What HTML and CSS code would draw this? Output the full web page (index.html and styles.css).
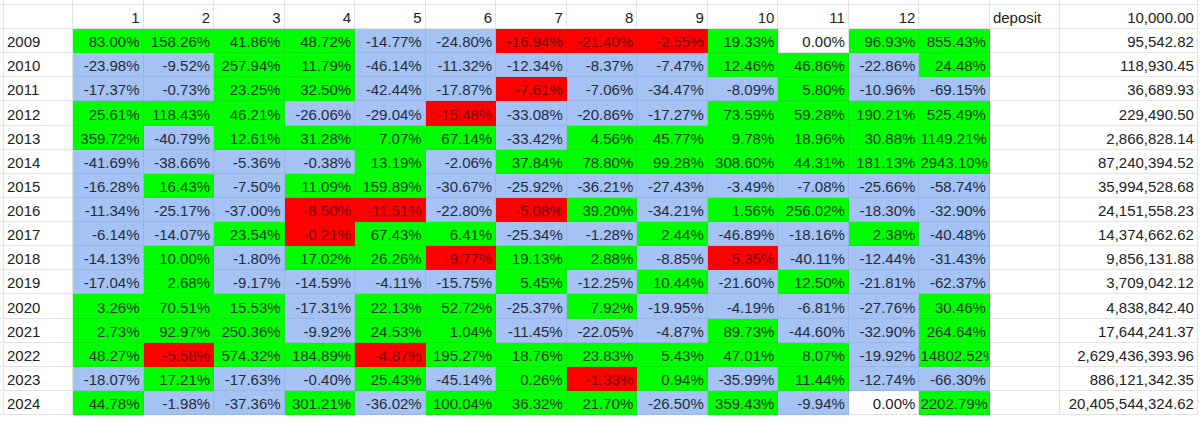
FILE: index.html
```html
<!DOCTYPE html>
<html>
<head>
<meta charset="utf-8">
<link rel="stylesheet" href="styles.css">
</head>
<body>
<div class="sheet">
<div class="c"></div><div class="c"></div><div class="c"></div><div class="c"></div><div class="c"></div><div class="c"></div><div class="c"></div><div class="c"></div><div class="c"></div><div class="c"></div><div class="c"></div><div class="c"></div><div class="c"></div><div class="c"></div><div class="c"></div><div class="c"></div><div class="c"></div>

<div class="c"></div><div class="c"></div><div class="c">1</div><div class="c">2</div><div class="c">3</div><div class="c">4</div><div class="c">5</div><div class="c">6</div><div class="c">7</div><div class="c">8</div><div class="c">9</div><div class="c">10</div><div class="c">11</div><div class="c">12</div><div class="c"></div><div class="c lbl">deposit</div><div class="c">10,000.00</div>

<div class="c"></div><div class="c y">2009</div><div class="c g">83.00%</div><div class="c g">158.26%</div><div class="c g">41.86%</div><div class="c g">48.72%</div><div class="c b">-14.77%</div><div class="c b">-24.80%</div><div class="c r">-16.94%</div><div class="c r">-21.40%</div><div class="c r">-2.55%</div><div class="c g">19.33%</div><div class="c">0.00%</div><div class="c g">96.93%</div><div class="c g">855.43%</div><div class="c"></div><div class="c">95,542.82</div>

<div class="c"></div><div class="c y">2010</div><div class="c b">-23.98%</div><div class="c b">-9.52%</div><div class="c g">257.94%</div><div class="c g">11.79%</div><div class="c b">-46.14%</div><div class="c b">-11.32%</div><div class="c b">-12.34%</div><div class="c b">-8.37%</div><div class="c b">-7.47%</div><div class="c g">12.46%</div><div class="c g">46.86%</div><div class="c b">-22.86%</div><div class="c g">24.48%</div><div class="c"></div><div class="c">118,930.45</div>

<div class="c"></div><div class="c y">2011</div><div class="c b">-17.37%</div><div class="c b">-0.73%</div><div class="c g">23.25%</div><div class="c g">32.50%</div><div class="c b">-42.44%</div><div class="c b">-17.87%</div><div class="c r">-7.61%</div><div class="c b">-7.06%</div><div class="c b">-34.47%</div><div class="c b">-8.09%</div><div class="c g">5.80%</div><div class="c b">-10.96%</div><div class="c b">-69.15%</div><div class="c"></div><div class="c">36,689.93</div>

<div class="c"></div><div class="c y">2012</div><div class="c g">25.61%</div><div class="c g">118.43%</div><div class="c g">46.21%</div><div class="c b">-26.06%</div><div class="c b">-29.04%</div><div class="c r">-15.48%</div><div class="c b">-33.08%</div><div class="c b">-20.86%</div><div class="c b">-17.27%</div><div class="c g">73.59%</div><div class="c g">59.28%</div><div class="c g">190.21%</div><div class="c g">525.49%</div><div class="c"></div><div class="c">229,490.50</div>

<div class="c"></div><div class="c y">2013</div><div class="c g">359.72%</div><div class="c b">-40.79%</div><div class="c g">12.61%</div><div class="c g">31.28%</div><div class="c g">7.07%</div><div class="c g">67.14%</div><div class="c b">-33.42%</div><div class="c g">4.56%</div><div class="c g">45.77%</div><div class="c g">9.78%</div><div class="c g">18.96%</div><div class="c g">30.88%</div><div class="c g clip">1149.21%</div><div class="c"></div><div class="c">2,866,828.14</div>

<div class="c"></div><div class="c y">2014</div><div class="c b">-41.69%</div><div class="c b">-38.66%</div><div class="c b">-5.36%</div><div class="c b">-0.38%</div><div class="c g">13.19%</div><div class="c b">-2.06%</div><div class="c g">37.84%</div><div class="c g">78.80%</div><div class="c g">99.28%</div><div class="c g">308.60%</div><div class="c g">44.31%</div><div class="c g">181.13%</div><div class="c g clip">2943.10%</div><div class="c"></div><div class="c">87,240,394.52</div>

<div class="c"></div><div class="c y">2015</div><div class="c b">-16.28%</div><div class="c g">16.43%</div><div class="c b">-7.50%</div><div class="c g">11.09%</div><div class="c g">159.89%</div><div class="c b">-30.67%</div><div class="c b">-25.92%</div><div class="c b">-36.21%</div><div class="c b">-27.43%</div><div class="c b">-3.49%</div><div class="c b">-7.08%</div><div class="c b">-25.66%</div><div class="c b">-58.74%</div><div class="c"></div><div class="c">35,994,528.68</div>

<div class="c"></div><div class="c y">2016</div><div class="c b">-11.34%</div><div class="c b">-25.17%</div><div class="c b">-37.00%</div><div class="c r">-8.50%</div><div class="c r">-11.51%</div><div class="c b">-22.80%</div><div class="c r">-5.08%</div><div class="c g">39.20%</div><div class="c b">-34.21%</div><div class="c g">1.56%</div><div class="c g">256.02%</div><div class="c b">-18.30%</div><div class="c b">-32.90%</div><div class="c"></div><div class="c">24,151,558.23</div>

<div class="c"></div><div class="c y">2017</div><div class="c b">-6.14%</div><div class="c b">-14.07%</div><div class="c g">23.54%</div><div class="c r">-0.21%</div><div class="c g">67.43%</div><div class="c g">6.41%</div><div class="c b">-25.34%</div><div class="c b">-1.28%</div><div class="c g">2.44%</div><div class="c b">-46.89%</div><div class="c b">-18.16%</div><div class="c g">2.38%</div><div class="c b">-40.48%</div><div class="c"></div><div class="c">14,374,662.62</div>

<div class="c"></div><div class="c y">2018</div><div class="c b">-14.13%</div><div class="c g">10.00%</div><div class="c b">-1.80%</div><div class="c g">17.02%</div><div class="c g">26.26%</div><div class="c r">-9.77%</div><div class="c g">19.13%</div><div class="c g">2.88%</div><div class="c b">-8.85%</div><div class="c r">-5.35%</div><div class="c b">-40.11%</div><div class="c b">-12.44%</div><div class="c b">-31.43%</div><div class="c"></div><div class="c">9,856,131.88</div>

<div class="c"></div><div class="c y">2019</div><div class="c b">-17.04%</div><div class="c g">2.68%</div><div class="c b">-9.17%</div><div class="c b">-14.59%</div><div class="c b">-4.11%</div><div class="c b">-15.75%</div><div class="c g">5.45%</div><div class="c b">-12.25%</div><div class="c g">10.44%</div><div class="c b">-21.60%</div><div class="c g">12.50%</div><div class="c b">-21.81%</div><div class="c b">-62.37%</div><div class="c"></div><div class="c">3,709,042.12</div>

<div class="c"></div><div class="c y">2020</div><div class="c g">3.26%</div><div class="c g">70.51%</div><div class="c g">15.53%</div><div class="c b">-17.31%</div><div class="c g">22.13%</div><div class="c g">52.72%</div><div class="c b">-25.37%</div><div class="c g">7.92%</div><div class="c b">-19.95%</div><div class="c b">-4.19%</div><div class="c b">-6.81%</div><div class="c b">-27.76%</div><div class="c g">30.46%</div><div class="c"></div><div class="c">4,838,842.40</div>

<div class="c"></div><div class="c y">2021</div><div class="c g">2.73%</div><div class="c g">92.97%</div><div class="c g">250.36%</div><div class="c b">-9.92%</div><div class="c g">24.53%</div><div class="c g">1.04%</div><div class="c b">-11.45%</div><div class="c b">-22.05%</div><div class="c b">-4.87%</div><div class="c g">89.73%</div><div class="c b">-44.60%</div><div class="c b">-32.90%</div><div class="c g">264.64%</div><div class="c"></div><div class="c">17,644,241.37</div>

<div class="c"></div><div class="c y">2022</div><div class="c g">48.27%</div><div class="c r">-5.58%</div><div class="c g">574.32%</div><div class="c g">184.89%</div><div class="c r">-4.87%</div><div class="c g">195.27%</div><div class="c g">18.76%</div><div class="c g">23.83%</div><div class="c g">5.43%</div><div class="c g">47.01%</div><div class="c g">8.07%</div><div class="c b">-19.92%</div><div class="c g clip">14802.52%</div><div class="c"></div><div class="c">2,629,436,393.96</div>

<div class="c"></div><div class="c y">2023</div><div class="c b">-18.07%</div><div class="c g">17.21%</div><div class="c b">-17.63%</div><div class="c b">-0.40%</div><div class="c g">25.43%</div><div class="c b">-45.14%</div><div class="c g">0.26%</div><div class="c r">-1.33%</div><div class="c g">0.94%</div><div class="c b">-35.99%</div><div class="c g">11.44%</div><div class="c b">-12.74%</div><div class="c b">-66.30%</div><div class="c"></div><div class="c">886,121,342.35</div>

<div class="c"></div><div class="c y">2024</div><div class="c g">44.78%</div><div class="c b">-1.98%</div><div class="c b">-37.36%</div><div class="c g">301.21%</div><div class="c b">-36.02%</div><div class="c g">100.04%</div><div class="c g">36.32%</div><div class="c g">21.70%</div><div class="c b">-26.50%</div><div class="c g">359.43%</div><div class="c b">-9.94%</div><div class="c">0.00%</div><div class="c g clip">2202.79%</div><div class="c"></div><div class="c">20,405,544,324.62</div>
</div>
</body>
</html>
```

FILE: styles.css
```css
html, body {
  margin: 0;
  padding: 0;
  background: #ffffff;
}

.sheet {
  display: grid;
  grid-template-columns: 4px 69px repeat(13, 70.54px) 70px 138px;
  grid-template-rows: 5px 24px repeat(16, 24.125px);
  font-family: "Liberation Sans", Arial, sans-serif;
  font-size: 15px;
  color: #222222;
}

.c {
  box-sizing: border-box;
  border-right: 1px solid #e2e3e3;
  border-bottom: 1px solid #e2e3e3;
  display: flex;
  align-items: flex-end;
  justify-content: flex-end;
  padding: 0 3px 2px 0;
  white-space: nowrap;
  overflow: hidden;
  line-height: 17px;
}

.y,
.lbl {
  justify-content: flex-start;
  padding-left: 3px;
}

.g {
  background: #00ff00;
  border-color: #0be80b;
  color: #133a13;
}

.b {
  background: #a4c2f4;
  border-color: #98b5e6;
  color: #262c38;
}

.r {
  background: #ff0000;
  border-color: #ff0000;
  color: #760000;
}

.clip {
  justify-content: flex-start;
  padding-left: 1px;
  padding-right: 0;
}
```
